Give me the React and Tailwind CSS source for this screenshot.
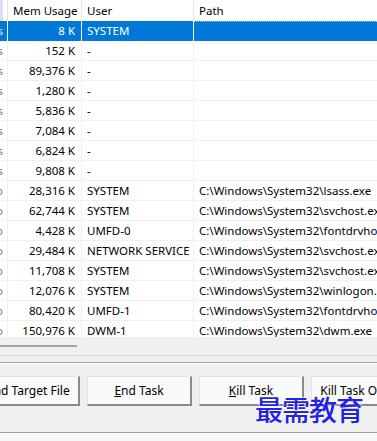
const rows = [
  { edge: 's', mem: '8 K', user: 'SYSTEM', path: '' },
  { edge: 's', mem: '152 K', user: '-', path: '' },
  { edge: 's', mem: '89,376 K', user: '-', path: '' },
  { edge: 's', mem: '1,280 K', user: '-', path: '' },
  { edge: 's', mem: '5,836 K', user: '-', path: '' },
  { edge: 's', mem: '7,084 K', user: '-', path: '' },
  { edge: 's', mem: '6,824 K', user: '-', path: '' },
  { edge: 's', mem: '9,808 K', user: '-', path: '' },
  { edge: 'o', mem: '28,316 K', user: 'SYSTEM', path: 'C:\\Windows\\System32\\lsass.exe' },
  { edge: 'o', mem: '62,744 K', user: 'SYSTEM', path: 'C:\\Windows\\System32\\svchost.exe' },
  { edge: 'o', mem: '4,428 K', user: 'UMFD-0', path: 'C:\\Windows\\System32\\fontdrvhost.exe' },
  { edge: 'o', mem: '29,484 K', user: 'NETWORK SERVICE', path: 'C:\\Windows\\System32\\svchost.exe' },
  { edge: 'o', mem: '11,708 K', user: 'SYSTEM', path: 'C:\\Windows\\System32\\svchost.exe' },
  { edge: 'o', mem: '12,076 K', user: 'SYSTEM', path: 'C:\\Windows\\System32\\winlogon.exe' },
  { edge: 'o', mem: '80,420 K', user: 'UMFD-1', path: 'C:\\Windows\\System32\\fontdrvhost.exe' },
  { edge: 'o', mem: '150,976 K', user: 'DWM-1', path: 'C:\\Windows\\System32\\dwm.exe' },
];

function Button({ children }) {
  return (
    <div className="w-[105px] h-[30px] shrink-0 flex items-center justify-center whitespace-nowrap bg-[#fafafa] border-t border-l border-t-[#e3e3e3] border-l-[#e3e3e3] border-r-2 border-b-2 border-r-[#8a8a8a] border-b-[#8a8a8a]">
      {children}
    </div>
  );
}

export default function App() {
  return (
    <div className="relative w-[377px] h-[441px] overflow-hidden bg-[#f0f0f0] text-[11.5px] text-black" style={{ fontFamily: '"Noto Sans", "Liberation Sans", sans-serif' }}>
      {/* list view */}
      <div className="h-[337px] overflow-hidden bg-white">
        {/* header */}
        <div className="flex h-[21px] items-center bg-white">
          <div className="w-[7px] h-full shrink-0 flex"><div className="w-[3px] h-full bg-[#dcdcf6]" /></div>
          <div className="w-px h-full bg-[#e5e5e5]" />
          <div className="w-[73px] shrink-0 pl-[5px] whitespace-nowrap">Mem Usage</div>
          <div className="w-px h-full bg-[#e5e5e5]" />
          <div className="w-[111px] shrink-0 pl-[5px]">User</div>
          <div className="w-px h-full bg-[#e5e5e5]" />
          <div className="flex-1 pl-[5px]">Path</div>
        </div>
        {/* rows */}
        {rows.map((r, i) => {
          const sel = i === 0;
          return (
            <div key={i} className={`flex h-[20px] items-center border-b ${sel ? 'bg-[#0078d7] text-white border-[#0078d7]' : 'border-[#f0f0f0]'}`}>
              <div className="w-[7px] h-full shrink-0 overflow-hidden flex items-center justify-end pt-px">
                <span className={`mr-[4px] ${sel ? 'text-[#dfe9f5]' : 'text-[#777]'}`}>{r.edge}</span>
              </div>
              <div className={`w-px h-[20px] ${sel ? 'bg-white' : 'bg-[#f0f0f0]'}`} />
              <div className="w-[73px] shrink-0 pr-[6px] pt-px text-right whitespace-nowrap">{r.mem}</div>
              <div className={`w-px h-[20px] ${sel ? 'bg-white' : 'bg-[#f0f0f0]'}`} />
              <div className="w-[111px] shrink-0 pl-[5px] pt-px whitespace-nowrap overflow-hidden">{r.user}</div>
              <div className={`w-px h-[20px] ${sel ? 'bg-white' : 'bg-[#f0f0f0]'}`} />
              <div className={`flex-1 h-full flex items-center pl-[5px] pt-px whitespace-nowrap overflow-hidden ${sel ? 'border-t border-dotted border-[#9ec6ee]' : ''}`}>{r.path}</div>
            </div>
          );
        })}
      </div>
      {/* horizontal scrollbar */}
      <div className="h-[18px] flex items-center">
        <div className="w-[77px] h-[2px] bg-[#a5a5a5]" />
      </div>
      <div className="h-px bg-[#d4d4d4]" />
      <div className="h-[6px]" />
      <div className="h-px bg-[#a0a0a0]" />
      <div className="h-px bg-white" />
      {/* buttons */}
      <div className="flex gap-[7px] ml-[-25px] mt-[12px] text-[12px]">
        <Button>Find Target File</Button>
        <Button><span><u>E</u>nd Task</span></Button>
        <Button><span><u>K</u>ill Task</span></Button>
        <Button>Kill Task Owner</Button>
      </div>
      <div className="mt-[26px] h-px bg-[#a0a0a0]" />
      <div className="h-full bg-[#f7f7f7]" />
      {/* watermark */}
      <div className="absolute left-[255px] top-[395px] text-[28px] leading-none font-medium text-[#2323e6] tracking-[-1px]"
        style={{ fontFamily: '"Noto Sans CJK SC", sans-serif', textShadow: '0 0 2px #fff, 0 0 2px #fff' }}>
        最需教育
      </div>
    </div>
  );
}
